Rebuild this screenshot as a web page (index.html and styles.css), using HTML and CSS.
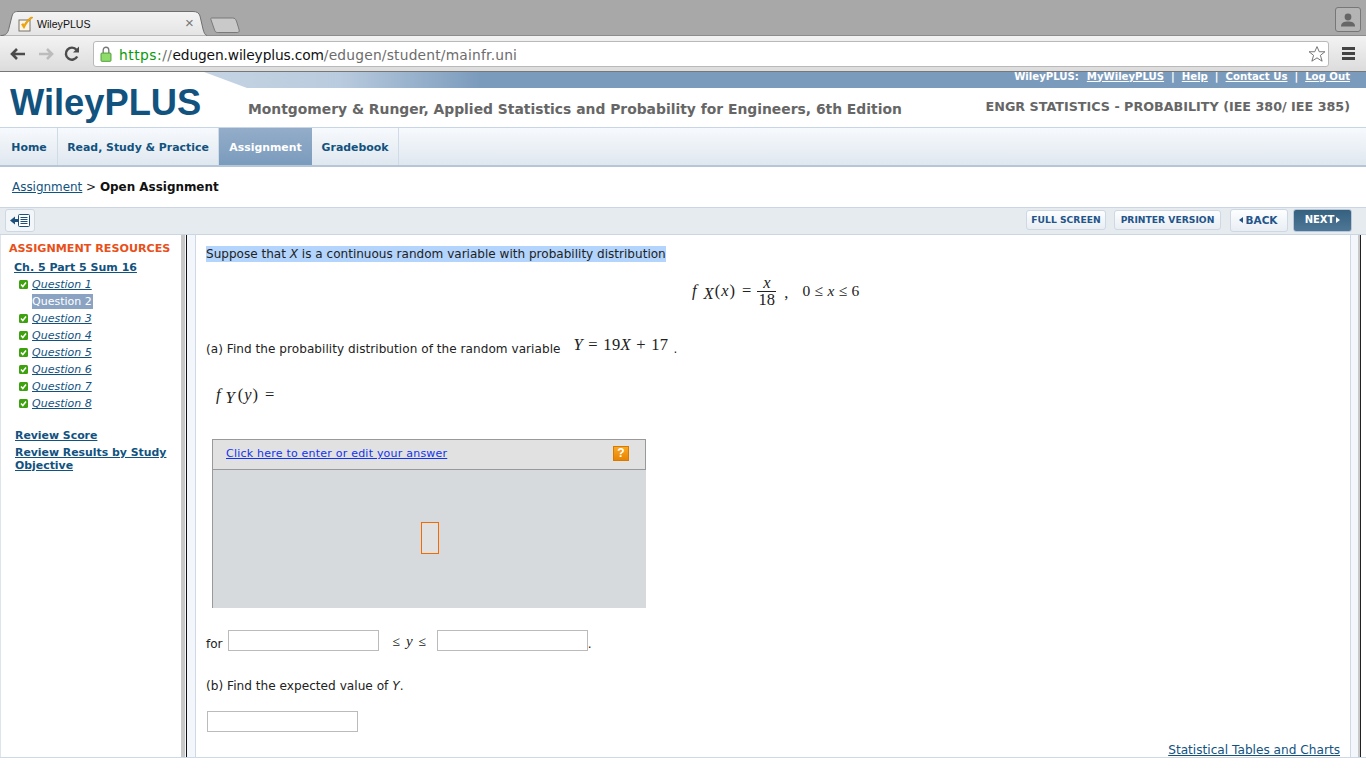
FILE: index.html
```html
<!DOCTYPE html>
<html lang="en">
<head>
<meta charset="utf-8">
<title>WileyPLUS</title>
<link rel="stylesheet" href="styles.css">
</head>
<body>
<div class="tabstrip">
  <div class="tab">
    <svg class="tab-shape" width="206" height="25" viewBox="0 0 206 25"><path d="M0 24.5C5 24.5 7 22 8 17L11 5C12 2 13 .5 17 .5H192C196 .5 198 2 199 5L202 18C203 22 204 24 206 24.5" fill="url(#tabfill)" stroke="#6f6f6f"/><defs><linearGradient id="tabfill" x1="0" y1="0" x2="0" y2="1"><stop offset="0" stop-color="#f4f4f4"/><stop offset="1" stop-color="#e4e4e4"/></linearGradient></defs></svg>
    <svg class="favicon" width="16" height="16" viewBox="0 0 16 16"><rect x="1" y="4" width="11" height="11" fill="#fbf6e6" stroke="#77736a"/><path d="M3.500 8.500L6 12.500C8 8 11 4 15 1.500L13 1C10 3 8 5.500 6.200 8.500L5 7.500Z" fill="#f2a900" stroke="#d98a00" stroke-width=".5"/></svg>
    <span class="tab-title">WileyPLUS</span>
    <span class="tab-close">×</span>
  </div>
  <svg class="newtab" width="31" height="16" viewBox="0 0 34 16" preserveAspectRatio="none"><path d="M1.500 1H25C27 1 28 2 29 4L32 13C32.500 15 31 15.500 30 15.500H8C6 15.500 5.500 14 5 13L1 2.500C.8 1.500 1 1 1.500 1Z" fill="#c9c9c9" stroke="#777"/></svg>
  <div class="profile"><svg width="16" height="14" viewBox="0 0 16 14"><circle cx="8" cy="4" r="3.400" fill="#666"/><path d="M1 13.500C1 9.500 4 8.500 8 8.500S15 9.500 15 13.500Z" fill="#666"/></svg></div>
</div>

<div class="toolbar">
  <svg class="nav-ic" width="18" height="14" viewBox="0 0 18 14"><path d="M16 7H4M8 2L3 7L8 12" fill="none" stroke="#4c4c4c" stroke-width="2.600"/></svg>
  <svg class="nav-ic" width="18" height="14" viewBox="0 0 18 14"><path d="M2 7H14M10 2L15 7L10 12" fill="none" stroke="#bcbcbc" stroke-width="2.600"/></svg>
  <svg class="nav-ic" width="16" height="16" viewBox="0 0 16 16"><path d="M13.200 10.500A6 6 0 1 1 12.500 3.800" fill="none" stroke="#4c4c4c" stroke-width="2.400"/><path d="M9 6.500H15V.5Z" fill="#4c4c4c"/></svg>
  <div class="omnibox">
    <svg class="lock" width="12" height="16" viewBox="0 0 12 17"><path d="M3 8V4.500C3 2.500 4.300 1.300 6 1.300S9 2.500 9 4.500V8" fill="none" stroke="#777" stroke-width="1.400"/><rect x=".7" y="7.500" width="10.600" height="8.800" rx="1" fill="#8fdc6a" stroke="#4e9b34"/></svg>
    <span class="url"><span class="scheme">https:</span><span class="slashes">//</span><span class="host">edugen.wileyplus.com</span><span class="path">/edugen/student/mainfr.uni</span></span>
    <svg class="star" width="18" height="18" viewBox="0 0 20 19"><path d="M10 1.300L12.500 7H18.800L13.800 11L15.700 17.500L10 13.800L4.300 17.500L6.200 11L1.200 7H7.500Z" fill="#fff" stroke="#666"/></svg>
  </div>
  <div class="menu"><i></i><i></i><i></i></div>
</div>

<header class="site">
  <div class="utility"><b>WileyPLUS:</b><a href="#">MyWileyPLUS</a><b>|</b><a href="#">Help</a><b>|</b><a href="#">Contact Us</a><b>|</b><a href="#">Log Out</a></div>
  <div class="logo">WileyPLUS</div>
  <div class="book">Montgomery &amp; Runger, Applied Statistics and Probability for Engineers, 6th Edition</div>
  <div class="course">ENGR STATISTICS - PROBABILITY (IEE 380/ IEE 385)</div>
</header>

<nav class="tabs">
  <a class="t-home" href="#">Home</a>
  <a class="t-read" href="#">Read, Study &amp; Practice</a>
  <a class="t-asg active" href="#">Assignment</a>
  <a class="t-grade" href="#">Gradebook</a>
</nav>

<div class="crumbs"><a href="#">Assignment</a> &gt; <b>Open Assignment</b></div>

<div class="actions">
  <button class="collapse"><svg width="22" height="15" viewBox="0 0 22 15"><path d="M1 7.500L6 3.500V6H9V9H6V11.500Z" fill="#1c4f7c"/><rect x="9.500" y="1.500" width="11" height="12" rx="1" fill="#fff" stroke="#1c4f7c"/><path d="M11.500 4.500H18.500M11.500 6.500H18.500M11.500 8.500H18.500M11.500 10.500H18.500" stroke="#1c4f7c"/></svg></button>
  <span class="grow"></span>
  <button class="btn b-full">FULL SCREEN</button>
  <button class="btn b-print">PRINTER VERSION</button>
  <button class="btn big b-back"><i class="tri-l"></i>BACK</button>
  <button class="btn big next"><span>NEXT</span><i class="tri-r"></i></button>
</div>

<main class="body">
  <aside class="side">
    <h2>ASSIGNMENT RESOURCES</h2>
    <a class="chapter" href="#">Ch. 5 Part 5 Sum 16</a>
    <ul class="qlist">
      <li><svg class="chk" viewBox="0 0 9 9"><rect width="9" height="9" rx="1.500" fill="#3ea10e"/><path d="M2 4.500L3.800 6.500L7 2.500" fill="none" stroke="#fff" stroke-width="1.500"/></svg><a href="#">Question 1</a></li>
      <li class="cur"><span>Question 2</span></li>
      <li><svg class="chk" viewBox="0 0 9 9"><rect width="9" height="9" rx="1.500" fill="#3ea10e"/><path d="M2 4.500L3.800 6.500L7 2.500" fill="none" stroke="#fff" stroke-width="1.500"/></svg><a href="#">Question 3</a></li>
      <li><svg class="chk" viewBox="0 0 9 9"><rect width="9" height="9" rx="1.500" fill="#3ea10e"/><path d="M2 4.500L3.800 6.500L7 2.500" fill="none" stroke="#fff" stroke-width="1.500"/></svg><a href="#">Question 4</a></li>
      <li><svg class="chk" viewBox="0 0 9 9"><rect width="9" height="9" rx="1.500" fill="#3ea10e"/><path d="M2 4.500L3.800 6.500L7 2.500" fill="none" stroke="#fff" stroke-width="1.500"/></svg><a href="#">Question 5</a></li>
      <li><svg class="chk" viewBox="0 0 9 9"><rect width="9" height="9" rx="1.500" fill="#3ea10e"/><path d="M2 4.500L3.800 6.500L7 2.500" fill="none" stroke="#fff" stroke-width="1.500"/></svg><a href="#">Question 6</a></li>
      <li><svg class="chk" viewBox="0 0 9 9"><rect width="9" height="9" rx="1.500" fill="#3ea10e"/><path d="M2 4.500L3.800 6.500L7 2.500" fill="none" stroke="#fff" stroke-width="1.500"/></svg><a href="#">Question 7</a></li>
      <li><svg class="chk" viewBox="0 0 9 9"><rect width="9" height="9" rx="1.500" fill="#3ea10e"/><path d="M2 4.500L3.800 6.500L7 2.500" fill="none" stroke="#fff" stroke-width="1.500"/></svg><a href="#">Question 8</a></li>
    </ul>
    <a class="review first" href="#">Review Score</a>
    <a class="review" href="#">Review Results by Study Objective</a>
  </aside>
  <div class="splitter"></div>
  <section class="content">
    <p class="intro"><span class="sel">Suppose that <i>X</i> is a continuous random variable with probability distribution</span></p>
    <div class="eq eq1">
      <span class="m f">f</span><span class="m sub">X</span><span class="r paren">(</span><span class="m">x</span><span class="r paren">)</span><span class="r equals">=</span>
      <span class="frac"><span class="m">x</span><span class="r den">18</span></span>
      <span class="r comma">,</span>
      <span class="r range">0 ≤ <span class="m">x</span> ≤ 6</span>
    </div>
    <p class="parta">(a) Find the probability distribution of the random variable <span class="eq2"><span class="m">Y</span><span class="r"> = 19</span><span class="m">X</span><span class="r"> + 17</span></span><span class="dot">.</span></p>
    <div class="eq eq3"><span class="m f">f</span><span class="m sub">Y</span><span class="r paren">(</span><span class="m">y</span><span class="r paren">)</span><span class="r equals">=</span></div>
    <div class="answer">
      <div class="answer-head"><a href="#">Click here to enter or edit your answer</a><span class="help">?</span></div>
      <div class="answer-body"><span class="cursor"></span></div>
    </div>
    <div class="forline"><span class="for">for</span><input class="field" type="text"><span class="r ineq">≤ <span class="m">y</span> ≤</span><input class="field" type="text"><span class="dot2">.</span></div>
    <p class="partb">(b) Find the expected value of <i>Y</i>.</p>
    <input class="field lone" type="text">
    <div class="tables"><a href="#">Statistical Tables and Charts</a></div>
  </section>
  <div class="rail"></div>
</main>
<div class="foot"></div>
</body>
</html>
```
FILE: styles.css
```css
* { box-sizing: border-box; }
html, body { margin: 0; height: 768px; overflow: hidden; }
body { display: flex; flex-direction: column; background: #fff; font-family: "DejaVu Sans", Verdana, sans-serif; color: #222; }
a { color: #11527f; }

/* browser chrome */
.tabstrip { height: 36px; flex: none; background: #a8a8a8; display: flex; align-items: flex-start; padding-left: 1px; border-bottom: 1px solid #8c8c8c; }
.tab { position: relative; width: 206px; height: 36px; padding: 12px 0 0 17px; display: flex; align-items: center; }
.tab-shape { position: absolute; left: 0; top: 11px; }
.favicon { position: relative; flex: none; }
.tab-title { position: relative; margin-left: 3px; font: 10.600px "Liberation Sans", Arial, sans-serif; color: #111; }
.tab-close { position: absolute; left: 184px; top: 15px; font: 15px/16px "Liberation Sans", Arial, sans-serif; color: #777; }
.newtab { flex: none; margin: 17px 0 0 3px; }
.profile { margin: 7px 5px 0 auto; width: 26px; height: 25px; border: 1px solid #777; border-radius: 3px; background: #b4b4b4; display: flex; align-items: center; justify-content: center; }

.toolbar { height: 36px; flex: none; display: flex; align-items: center; background: linear-gradient(#f3f3f3, #dcdcdc); border-bottom: 1px solid #777; padding: 1px 0 1px 9px; }
.nav-ic { flex: none; margin-right: 10px; }
.nav-ic + .nav-ic + .nav-ic { margin: 0 12px 0 -1px; }
.omnibox { width: 1236px; height: 26px; margin-left: 1px; flex: none; background: #fff; border: 1px solid #b9b9b9; border-radius: 3px; display: flex; align-items: center; padding: 0 2px 0 6px; }
.lock { flex: none; }
.url { margin-left: 7px; font: 13.800px "DejaVu Sans", sans-serif; letter-spacing: .2px; white-space: nowrap; position: relative; top: 1px; }
.scheme { color: #0a9a0a; letter-spacing: .5px; }
.slashes { color: #6c6c6c; letter-spacing: .5px; }
.path { color: #6c6c6c; }
.host { color: #111; letter-spacing: -.15px; }
.star { margin-left: auto; flex: none; }
.menu { margin-left: 13px; display: flex; flex-direction: column; gap: 2px; }
.menu i { display: block; width: 13px; height: 3px; background: #444; }

/* site header */
.site { height: 56px; flex: none; display: grid; grid-template-columns: 248px 1fr auto; grid-template-rows: 16px 1fr; border-bottom: 1px solid #c8d5e6; }
.utility { grid-area: 1 / 1 / 2 / 4; display: flex; justify-content: flex-end; align-items: center; gap: 7px; padding: 0 16px 8px 0; color: #fff; font-size: 10.130px; font-weight: 700;
  background: linear-gradient(to right, #c5d4e3 200px, #b9cbde 340px, #7b9bbd 480px);
  clip-path: polygon(204px 0, 100% 0, 100% 100%, 247px 100%); }
.utility a { color: #fff; }
.utility b:first-child { margin-right: 1px; }
.logo { grid-area: 1 / 1 / 3 / 2; align-self: start; margin: 9px 0 0 10px; font: 700 36.300px/44px "Liberation Sans", Arial, sans-serif; color: #11527f; white-space: nowrap; }
.book { grid-area: 2 / 2; margin-top: 13px; font-size: 13.885px; font-weight: 700; color: #666; white-space: nowrap; }
.course { grid-area: 2 / 3; margin: 11px 16px 0 0; font-size: 12.730px; font-weight: 700; color: #666; white-space: nowrap; }

/* tabs */
.tabs { height: 39px; flex: none; display: flex; background: linear-gradient(#f7fafd, #dfe7ef); border-bottom: 2px solid #b6c6d8; padding-left: 1px; }
.tabs a { display: flex; align-items: center; justify-content: center; padding-top: 2px; font-size: 10.900px; font-weight: 700; text-decoration: none; color: #11527f; border-right: 1px solid #cfdbe7; }
.t-home { width: 57px; }
.t-read { width: 161px; }
.t-asg { width: 93px; }
.t-grade { width: 87px; }
.tabs a.active { color: #fff; background: linear-gradient(#93adc9, #7b9bbd); border-right: 0; }

.crumbs { height: 40px; flex: none; display: flex; align-items: center; padding: 0 0 0 12px; font-size: 11.950px; color: #222; white-space: pre; }
.crumbs b { color: #111; }

.actions { height: 28px; flex: none; display: flex; align-items: center; gap: 8px; background: #e6ebf0; border-top: 1px solid #ccd6e3; border-bottom: 1px solid #ccd6e3; padding: 0 14px 2px 5px; }
.grow { flex: 1; }
.collapse { width: 30px; height: 23px; padding: 0; display: flex; align-items: center; justify-content: center; background: #f3f6f9; border: 1px solid #cdd8e3; border-radius: 3px; }
.btn { height: 20px; padding: 0 0 1px; border: 1px solid #cdd8e3; border-radius: 3px; background: linear-gradient(#fdfeff, #e9eef3); color: #22548a; font: 700 9.200px "DejaVu Sans", sans-serif; display: flex; align-items: center; justify-content: center; }
.b-full { width: 80px; }
.b-print { width: 107px; }
.big { height: 23px; font-size: 10.500px; }
.b-back { width: 58px; margin-left: 1px; padding-right: 2px; }
.next { width: 59px; margin-left: -3px; border-color: #b8c8d8; color: #fff; font-size: 10px; background: linear-gradient(#35617f, #4f7696); }
.tri-l, .tri-r { display: block; width: 0; height: 0; border-top: 3.500px solid transparent; border-bottom: 3.500px solid transparent; }
.tri-l { border-right: 4px solid #22548a; margin-right: 3px; }
.tri-r { border-left: 4px solid #fff; margin-left: 2px; }

/* body */
.body { flex: 1; min-height: 0; display: flex; }
.side { width: 181px; flex: none; padding: 6px 0 0 9px; border-left: 1px solid #dde4ec; font-size: 11px; }
.side a { display: block; }
.side h2 { margin: 0 0 0 -1px; font-size: 11.150px; line-height: 15px; font-weight: 700; color: #e8501a; white-space: nowrap; }
.chapter { margin: 4px 0 0 4px; font-weight: 700; font-size: 11px; line-height: 15px; }
.qlist { list-style: none; margin: 1px 0 0 9px; padding: 0; }
.qlist li { height: 17px; display: flex; align-items: center; gap: 4px; font-style: italic; }
.qlist a { font-size: 11px; }
.chk { width: 9px; height: 9px; flex: none; }
.cur span { margin-left: 13px; padding: 0 1px 0 0; background: #8aa3c3; color: #fff; font-style: normal; line-height: 15px; }
.review { margin: 0 8px 0 5px; font-weight: 700; font-size: 10.900px; line-height: 13px; padding: 2px 0; }
.review.first { margin-top: 15px; }

.splitter { width: 15px; flex: none; background: linear-gradient(to right, #c8c8c8 4.500px, #f7f7f7 4.500px, #f7f7f7 5px, #111 5px, #111 6.300px, #f3f6fa 6.300px); border-right: 1px solid #cfd9e5; }

.content { width: 1154px; flex: none; padding: 0 10px 0 10px; font-size: 12.050px; color: #222; }
.content p { margin: 0; }
.intro { height: 17px; margin-top: 11px !important; line-height: 17px; }
.sel { display: inline-block; background: #b3d4fc; line-height: 16px; }
.m { font: italic 16.500px "Liberation Serif", serif; }
.r { font: 16.500px "Liberation Serif", serif; }
.f { margin-right: 2px; }
.sub { position: relative; top: 3px; margin: 0 0 0 5px; }
.paren { margin: 0 1px; }
.equals { margin: 0 6px 0 6px; }
.eq { display: flex; align-items: center; white-space: pre; }
.eq1 { height: 40px; margin-top: 8px; padding-left: 486px; }
.frac { display: inline-flex; flex-direction: column; align-items: center; width: 19px; line-height: 15px; }
.frac .m { border-bottom: 1px solid #222; width: 100%; text-align: center; line-height: 16px; }
.den { line-height: 15px; }
.comma { margin: 0 14px 0 8px; position: relative; top: 2px; }
.range { font-size: 15.500px; word-spacing: .5px; }
.range .m { font-size: 15.500px; }
.parta { height: 20px; margin-top: 28px !important; display: flex; align-items: center; white-space: pre; letter-spacing: .05px; }
.eq2 { margin-left: 9px; position: relative; top: -4px; word-spacing: 1px; letter-spacing: .3px; }
.dot { margin-left: 5px; }
.eq3 { height: 24px; margin: 24px 0 0 10px; }
.eq3 .sub { margin-left: 3px; margin-right: 2px; }
.answer { width: 434px; margin: 32px 0 0 6px; border-left: 1px solid #999; }
.answer-head { height: 31px; display: flex; align-items: center; justify-content: space-between; padding: 0 16px 2px 13px; background: #e1e1e1; border-top: 1px solid #999; border-bottom: 1px solid #999; border-right: 1px solid #999; }
.answer-head a { color: #1133ee; font-size: 11px; letter-spacing: .22px; }
.help { width: 16px; height: 15px; background: linear-gradient(#f9a825, #e98400); border: 1px solid #d97a00; color: #fff; font: 700 12px/13px "Liberation Sans", sans-serif; text-align: center; }
.answer-body { height: 138px; background: #d7dadd; display: flex; justify-content: center; align-items: center; padding: 0 0 3px 1px; }
.cursor { width: 18px; height: 32px; background: #e1e1e1; border: 1px solid #f26a00; }
.forline { height: 21px; margin-top: 22px; display: flex; align-items: center; white-space: pre; }
.for { position: relative; top: 3px; margin-right: 5px; }
.field { width: 151px; height: 21px; padding: 0; border: 1px solid #bbb; background: #fff; margin: 0; }
.ineq { margin: 0 11px 0 14px; font-size: 13.500px; word-spacing: 2.500px; position: relative; top: 1px; }
.ineq .m { font-size: 15px; }
.dot2 { align-self: flex-end; }
.partb { height: 16px; margin: 27px 0 0 0 !important; line-height: 16px; font-size: 12.150px; }
.field.lone { display: block; margin: 17px 0 0 1px; }
.tables { margin-top: 9px; text-align: right; font-size: 12.150px; line-height: 18px; }

.rail { flex: 1; background: linear-gradient(to right, #cfd9e5 1px, #f3f6fa 1px, #f3f6fa 8px, #c8c8c8 8px, #c8c8c8 10px, #222 10px, #222 11px, #fff 11px); }
.foot { height: 11px; flex: none; border-top: 1px solid #cfd9e5; background: #fff; }
```
